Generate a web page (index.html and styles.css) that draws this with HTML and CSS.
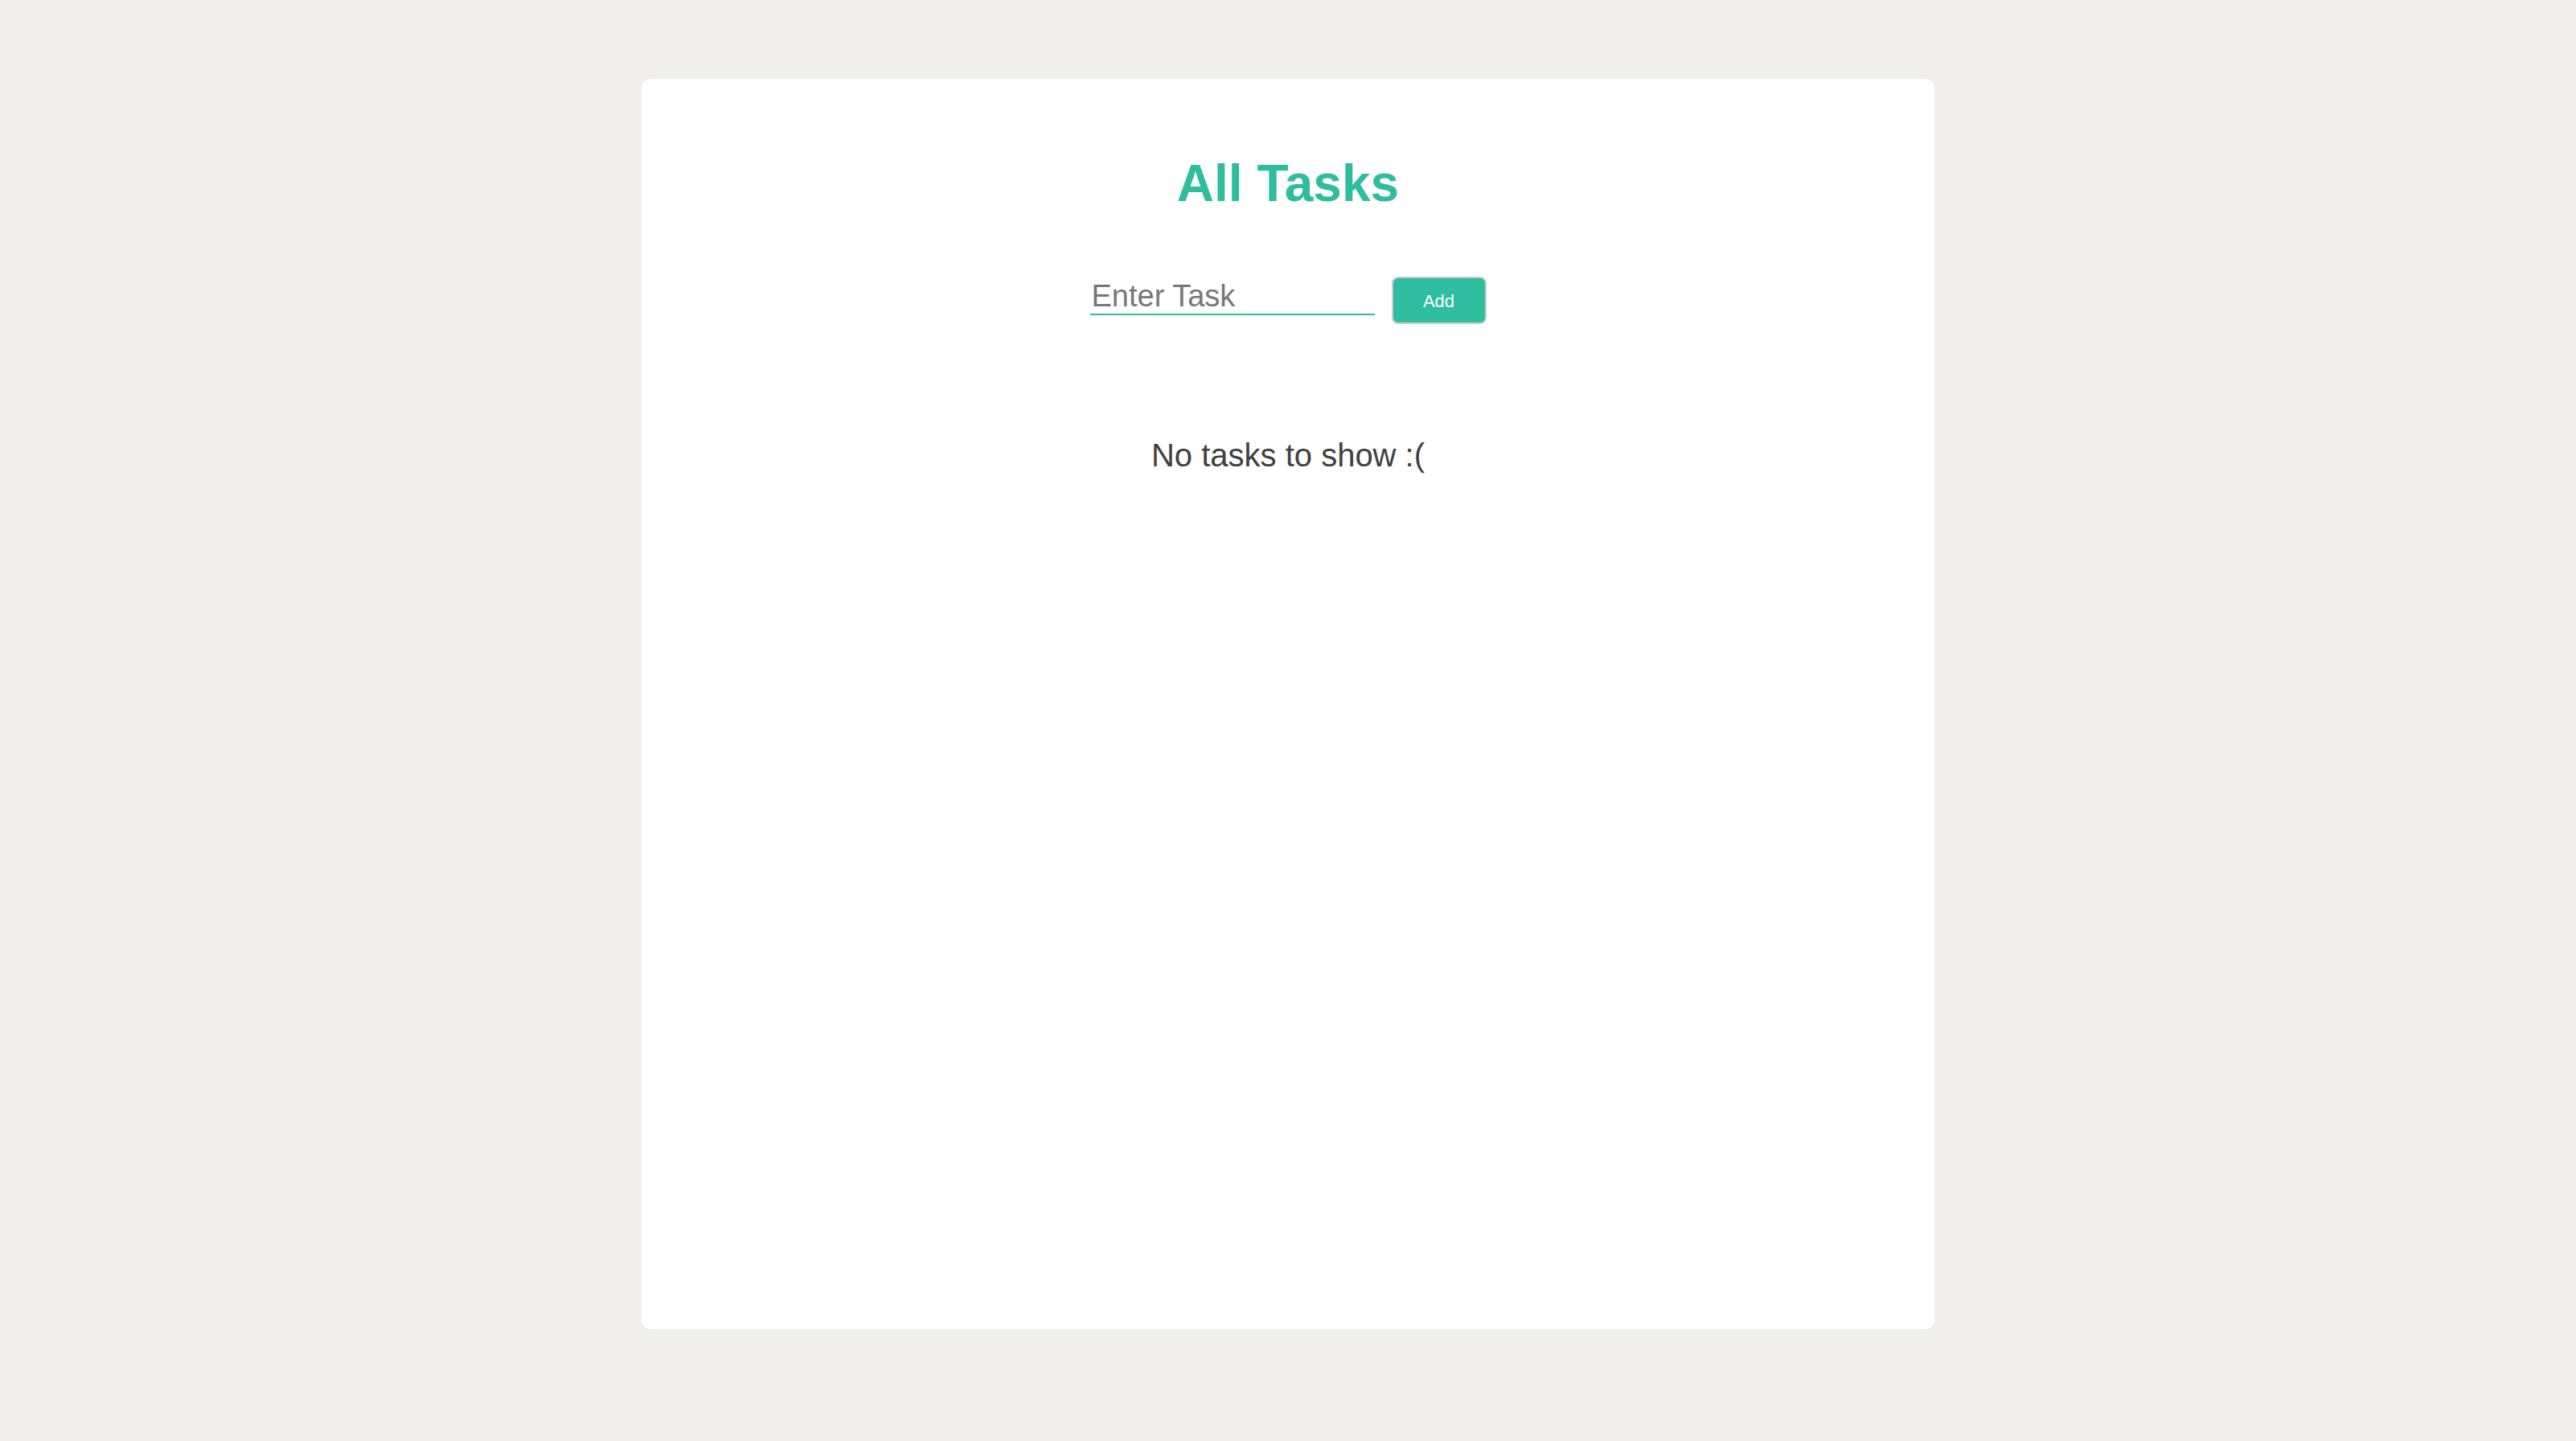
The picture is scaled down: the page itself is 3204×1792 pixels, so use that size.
FILE: index.html
```html
<!DOCTYPE html>
<html lang="en">
<head>
<meta charset="utf-8">
<title>All Tasks</title>
<link rel="stylesheet" href="styles.css">
</head>
<body>
<main class="card">
  <h1 class="title">All Tasks</h1>
  <form class="add-row" onsubmit="return false;">
    <input class="task-input" type="text" placeholder="Enter Task">
    <button class="add-btn" type="submit">Add</button>
  </form>
  <p class="empty">No tasks to show :(</p>
</main>
</body>
</html>
```
FILE: styles.css
```css
html, body {
  margin: 0;
  padding: 0;
}
body {
  background: #f0efeb;
  font-family: "Liberation Sans", Arial, Helvetica, sans-serif;
  min-height: 1792px;
  box-sizing: border-box;
  padding-top: 98px;
}
.card {
  box-sizing: border-box;
  width: 1608px;
  height: 1555px;
  margin: 0 auto;
  background: #ffffff;
  border-radius: 12px;
  padding-top: 94px;
  display: flex;
  flex-direction: column;
  align-items: center;
}
.title {
  margin: 0;
  font-size: 64px;
  line-height: 1.15;
  font-weight: 700;
  color: #2ebd9e;
}
.add-row {
  margin: 78px 0 0 0;
  display: flex;
  align-items: flex-start;
  gap: 21px;
}
.task-input {
  box-sizing: border-box;
  width: 354px;
  height: 48px;
  padding: 4px 0 0 2px;
  border: none;
  border-bottom: 2px solid #2ebd9e;
  background: transparent;
  outline: none;
  font-family: "Liberation Sans", Arial, Helvetica, sans-serif;
  font-size: 38px;
  color: #333;
}
.task-input::placeholder {
  color: #777777;
}
.add-btn {
  box-sizing: border-box;
  width: 118px;
  height: 59px;
  background: #2ebd9e;
  border: 2px solid #cdcdcd;
  border-radius: 8px;
  color: #ffffff;
  font-family: "Liberation Sans", Arial, Helvetica, sans-serif;
  font-size: 22px;
  padding: 3px 0 0 0;
  cursor: pointer;
}
.empty {
  margin: 140px 0 0 0;
  font-size: 40px;
  line-height: 46px;
  color: #404040;
}
```
